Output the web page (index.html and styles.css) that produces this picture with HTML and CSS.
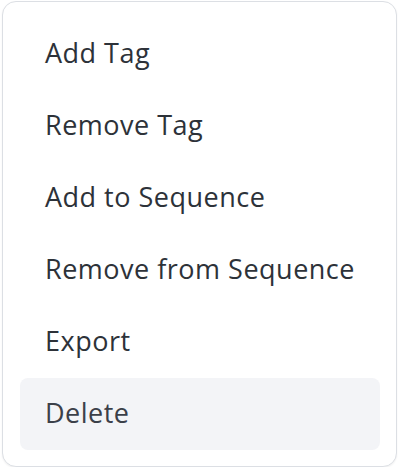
FILE: index.html
```html
<!DOCTYPE html>
<html lang="en">
<head>
    <meta charset="UTF-8">
    <meta name="viewport" content="width=device-width, initial-scale=1.0">
    <title>Bulk Actions</title>
    <link rel="stylesheet" href="styles.css">
</head>
<body>
    <div class="menu">
        <div class="menu-item">Add Tag</div>
        <div class="menu-item">Remove Tag</div>
        <div class="menu-item">Add to Sequence</div>
        <div class="menu-item">Remove from Sequence</div>
        <div class="menu-item">Export</div>
        <div class="menu-item active">Delete</div>
    </div>
</body>
</html>
```

FILE: styles.css
```css
body {
    margin: 0;
    background: #ffffff;
    font-family: "Open Sans", "Noto Sans", sans-serif;
}
.menu {
    margin: 1px 3px 0 2px;
    padding: 16px 16px 16px 17px;
    border: 1px solid #dcdfe4;
    border-radius: 14px;
    background: #ffffff;
    box-shadow: 0 1px 2px rgba(0, 0, 0, 0.06);
}
.menu-item {
    height: 72px;
    box-sizing: border-box;
    display: flex;
    align-items: center;
    padding: 0 0 3px 25px;
    border-radius: 8px;
    font-size: 27px;
    letter-spacing: 0.5px;
    color: #2d3239;
}
.menu-item.active {
    background-color: #f3f4f7;
    color: #3b4049;
}
```
